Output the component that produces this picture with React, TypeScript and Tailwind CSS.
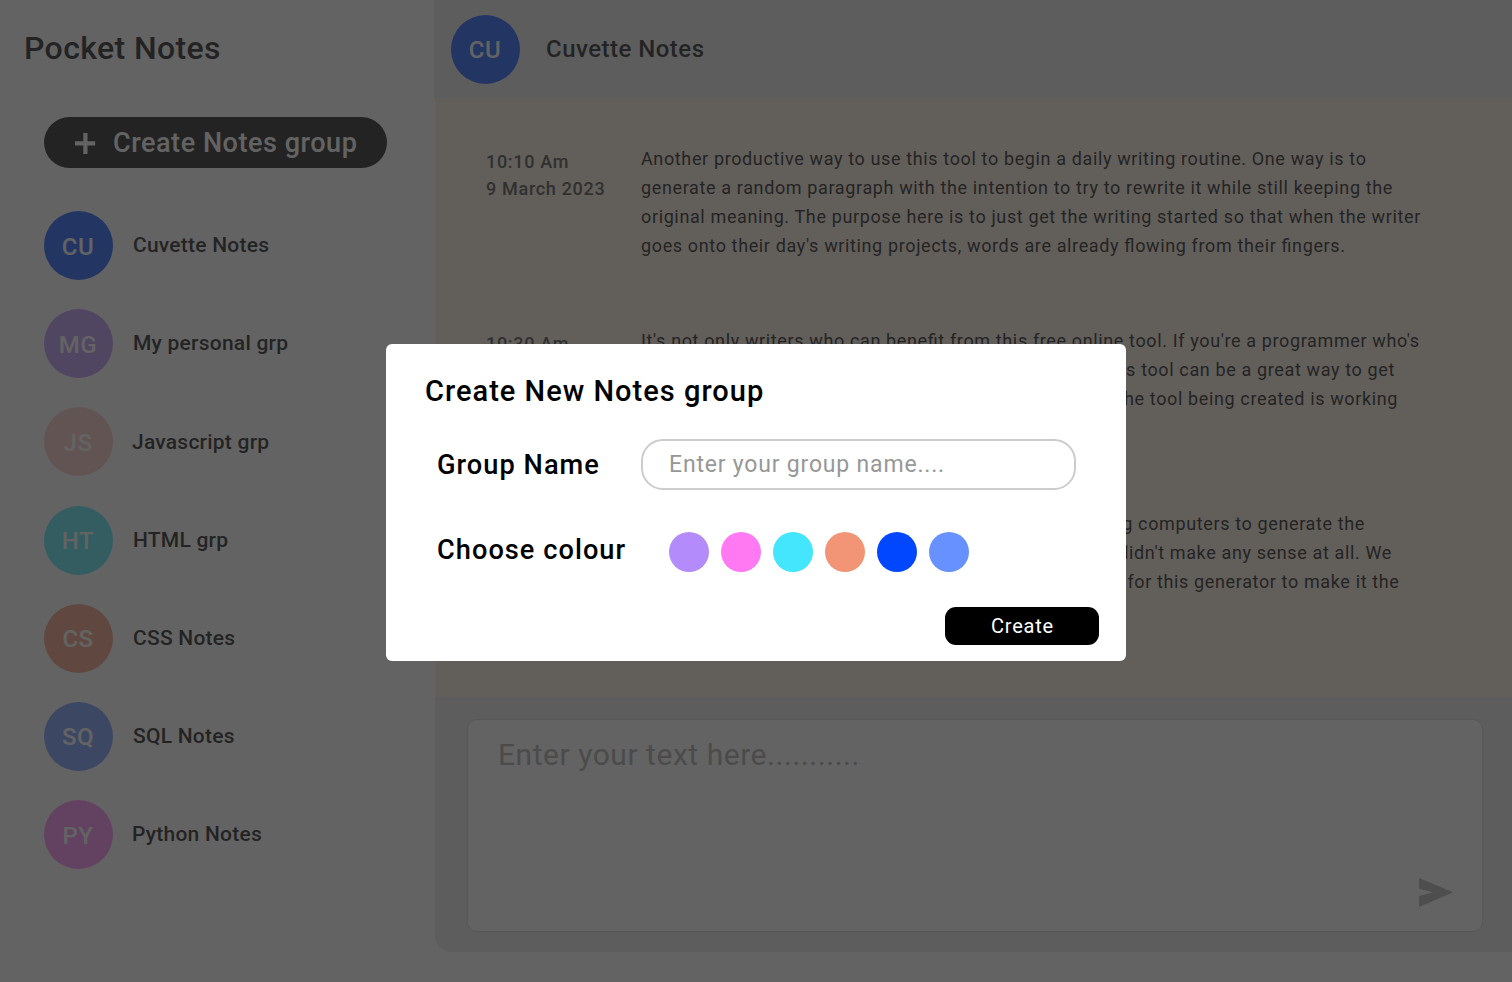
import React from "react";

type Group = { initials: string; name: string; color: string; gap: string };

const groups: Group[] = [
  { initials: "CU", name: "Cuvette Notes", color: "bg-[#0047FF]", gap: "gap-5" },
  { initials: "MG", name: "My personal grp", color: "bg-[#B38BFA]", gap: "gap-5" },
  { initials: "JS", name: "Javascript grp", color: "bg-[#FFC1C1]", gap: "gap-[19px]" },
  { initials: "HT", name: "HTML grp", color: "bg-[#43E6FC]", gap: "gap-5" },
  { initials: "CS", name: "CSS Notes", color: "bg-[#F19576]", gap: "gap-5" },
  { initials: "SQ", name: "SQL Notes", color: "bg-[#6691FF]", gap: "gap-5" },
  { initials: "PY", name: "Python Notes", color: "bg-[#FF79F2]", gap: "gap-[19px]" },
];

type Line = { text: string; width?: string };

const notes: { time: string; date: string; lines: Line[] }[] = [
  {
    time: "10:10 Am",
    date: "9 March 2023",
    lines: [
      { text: "Another productive way to use this tool to begin a daily writing routine. One way is to" },
      { text: "generate a random paragraph with the intention to try to rewrite it while still keeping the" },
      { text: "original meaning. The purpose here is to just get the writing started so that when the writer" },
      { text: "goes onto their day's writing projects, words are already flowing from their fingers." },
    ],
  },
  {
    time: "10:30 Am",
    date: "9 March 2023",
    lines: [
      { text: "It's not only writers who can benefit from this free online tool. If you're a programmer who's" },
      { text: "working on a project where blocks of text are needed, this tool can be a great way to get", width: "w-[754px]" },
      { text: "that. It's a good way to test your programming and that the tool being created is working", width: "w-[757px]" },
      { text: "well." },
    ],
  },
  {
    time: "10:30 Am",
    date: "9 March 2023",
    lines: [
      { text: "Random text has been around for as long as we have been using computers to generate the", width: "w-[724px]" },
      { text: "words. Early results were strange, and often they didn't make any sense at all. We", width: "w-[751px]" },
      { text: "have spent a lot of time since then on the rules for this generator to make it the", width: "w-[758.5px]" },
      { text: "best it can be." },
    ],
  },
];

const swatches = [
  "bg-[#B38BFA]",
  "bg-[#FF79F2]",
  "bg-[#43E6FC]",
  "bg-[#F19576]",
  "bg-[#0047FF]",
  "bg-[#6691FF]",
];

function Avatar({ group }: { group: Group }) {
  return (
    <div
      className={`flex size-[69px] shrink-0 items-center justify-center rounded-full pt-[2px] pr-px text-[24px] font-medium tracking-[0.02em] text-white ${group.color}`}
    >
      {group.initials}
    </div>
  );
}

function Sidebar() {
  return (
    <aside className="flex w-[434px] shrink-0 flex-col">
      <h1 className="mt-[28px] ml-[24px] text-[32px] leading-[40px] font-medium tracking-[0.012em]">Pocket Notes</h1>
      <button className="mt-[49px] ml-[44px] flex h-[51px] w-[343px] items-center rounded-full bg-black pl-[31px] text-[27px] font-medium tracking-[0.02em] whitespace-nowrap text-white">
        <svg className="mt-[2px] mr-[17px]" width="21" height="21" viewBox="0 0 21 21" fill="currentColor">
          <path d="M8.3 0h4.2v8.3h7.7v4.2h-7.7V21H8.3v-8.5H0V8.3h8.3z" />
        </svg>
        <span className="mt-[2px]">Create Notes group</span>
      </button>
      <ul className="mt-[43px] ml-[44px] flex flex-col gap-[29.2px]">
        {groups.map((g) => (
          <li key={g.initials} className={`flex items-center ${g.gap}`}>
            <Avatar group={g} />
            <span className="mt-px text-[21px] font-medium tracking-[0.011em]">{g.name}</span>
          </li>
        ))}
      </ul>
    </aside>
  );
}

function Conversation() {
  return (
    <main className="flex min-w-0 flex-1 flex-col">
      <header className="flex h-[98px] shrink-0 items-center gap-[26px] bg-[#E8E8E8] pl-[17px]">
        <Avatar group={groups[0]} />
        <h2 className="text-[24px] font-medium tracking-[0.02em]">Cuvette Notes</h2>
      </header>
      <section className="ml-px flex h-[599px] shrink-0 flex-col gap-[66.4px] overflow-hidden bg-[#FBEADC] pt-[46px] pl-[51px] [font-feature-settings:'liga'_1]">
        {notes.map((n, i) => (
          <article key={i} className="flex h-[116px] shrink-0">
            <div className="w-[155px] shrink-0 pt-[4px] text-[18px] leading-[27px] font-medium tracking-[0.038em] text-[#353535]">
              <p>{n.time}</p>
              <p>{n.date}</p>
            </div>
            <div className="text-[18px] leading-[29px] tracking-[0.035em] whitespace-nowrap">
              {n.lines.map((l) => (
                <p key={l.text} className={l.width ? `flex justify-end ${l.width}` : ""}>
                  {l.text}
                </p>
              ))}
            </div>
          </article>
        ))}
      </section>
      <footer className="ml-px flex h-[255px] shrink-0 rounded-bl-[16px] bg-[#E8E8E8] pt-[22px] pr-[29px] pb-[20px] pl-[32px]">
        <div className="flex flex-1 items-end rounded-[10px] border border-[#CCCCCC] bg-white pr-[28px] pb-[24px] pl-[30px]">
          <textarea
            readOnly
            className="h-[188px] min-w-0 flex-1 resize-none self-start pt-[17px] text-[30px] leading-[36px] tracking-[0.018em] outline-none placeholder:text-[#A0A0A0]"
            placeholder="Enter your text here..........."
          />
          <svg width="35" height="29" viewBox="0 0 35 29" className="shrink-0 fill-[#ABABAB]">
            <path d="M0 0L34.3 14.3L0 29V18L14.5 14.3L0 10.7z" />
          </svg>
        </div>
      </footer>
    </main>
  );
}

function CreateGroupDialog() {
  return (
    <div className="absolute inset-0 flex items-center justify-center bg-[#2F2F2F]/75 pt-[23px]">
      <div role="dialog" className="flex h-[317px] w-[740px] flex-col rounded-[6px] bg-white pl-[39px]">
        <h2 className="mt-[27px] text-[29px] leading-[40px] font-medium tracking-[0.035em]">Create New Notes group</h2>
        <div className="mt-[28px] flex h-[51px] items-center pl-[12px]">
          <label className="mt-px w-[204px] text-[27.2px] font-medium tracking-[0.038em]">Group Name</label>
          <input
            readOnly
            className="h-[51px] w-[435px] rounded-[22px] border-2 border-[#CCCCCC] pl-[26px] text-[23px] tracking-[0.035em] outline-none placeholder:text-[#979797]"
            placeholder="Enter your group name...."
          />
        </div>
        <div className="mt-[42px] flex h-[40px] items-center pl-[12px]">
          <span className="-mt-[4px] w-[232px] text-[27.2px] font-medium tracking-[0.038em]">Choose colour</span>
          <div className="flex gap-3">
            {swatches.map((c) => (
              <button key={c} className={`size-10 rounded-full ${c}`} />
            ))}
          </div>
        </div>
        <button className="mt-[35px] mr-[27px] h-[38px] w-[154px] self-end rounded-[11px] bg-black pl-px text-[20px] tracking-[0.04em] text-white">
          Create
        </button>
      </div>
    </div>
  );
}

export default function App() {
  return (
    <div className="relative flex h-[982px] w-[1512px] overflow-hidden bg-white font-['Roboto',sans-serif] text-black">
      <Sidebar />
      <Conversation />
      <CreateGroupDialog />
    </div>
  );
}
